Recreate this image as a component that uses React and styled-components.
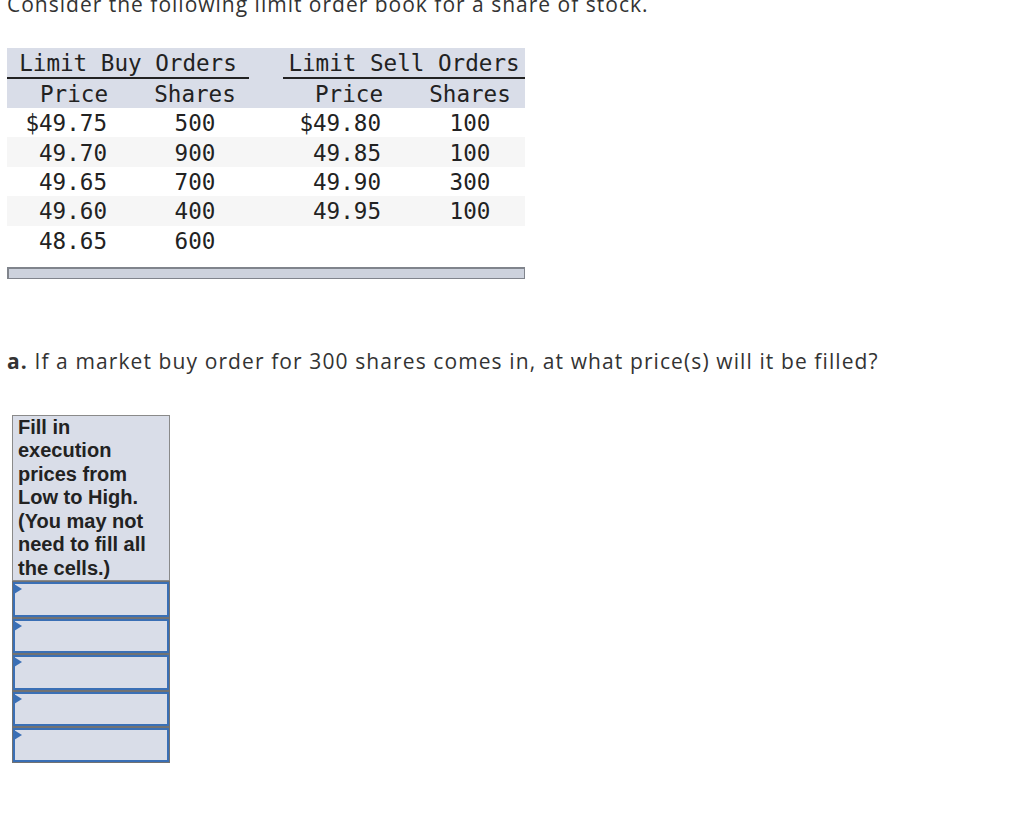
import React from 'react'
import styled, { createGlobalStyle } from 'styled-components'

const GlobalStyle = createGlobalStyle`
  body {
    margin: 0;
    background: #fff;
    overflow: hidden;
  }
`

const buyOrders = [
  ['$49.75', '500'],
  ['49.70', '900'],
  ['49.65', '700'],
  ['49.60', '400'],
  ['48.65', '600'],
]

const sellOrders = [
  ['$49.80', '100'],
  ['49.85', '100'],
  ['49.90', '300'],
  ['49.95', '100'],
]

const App = () => {
  const rows = buyOrders.map((buy, i) => [buy, sellOrders[i] || ['', '']])

  return (
    <Page>
      <GlobalStyle />
      <Intro>Consider the following limit order book for a share of stock.</Intro>

      <BookTable>
        <colgroup>
          <col style={{ width: 134 }} />
          <col style={{ width: 108 }} />
          <col style={{ width: 34 }} />
          <col style={{ width: 132 }} />
          <col style={{ width: 110 }} />
        </colgroup>
        <thead>
          <TitleRow>
            <TitleCell colSpan={2}>Limit Buy Orders</TitleCell>
            <GapCell />
            <TitleCell colSpan={2}>Limit Sell Orders</TitleCell>
          </TitleRow>
          <SubRow>
            <SubCell>Price</SubCell>
            <SubCell>Shares</SubCell>
            <GapCell />
            <SubCell>Price</SubCell>
            <SubCell>Shares</SubCell>
          </SubRow>
        </thead>
        <tbody>
          {rows.map(([buy, sell], i) => (
            <DataRow key={i} $shaded={i % 2 === 1}>
              <PriceCell>{buy[0]}</PriceCell>
              <SharesCell>{buy[1]}</SharesCell>
              <td />
              <PriceCell>{sell[0]}</PriceCell>
              <SharesCell>{sell[1]}</SharesCell>
            </DataRow>
          ))}
        </tbody>
      </BookTable>

      <ScrollBar />

      <Question>
        <b>a.</b> If a market buy order for 300 shares comes in, at what price(s) will it be filled?
      </Question>

      <FillBox>
        <FillHeader>
          Fill in execution prices from Low to High. (You may not need to fill all the cells.)
        </FillHeader>
        {[0, 1, 2, 3, 4].map((n) => (
          <FillCell key={n}>
            <FillInput type="text" aria-label={`price ${n + 1}`} />
          </FillCell>
        ))}
      </FillBox>
    </Page>
  )
}

export default App

const Page = styled.div`
  padding: 0 7px;
  color: #333;
  font-family: "Open Sans", "Liberation Sans", sans-serif;
`

const Intro = styled.p`
  margin: -9px 0 0;
  font-size: 21px;
  line-height: 27px;
  letter-spacing: 1px;
`

const BookTable = styled.table`
  margin-top: 30px;
  width: 518px;
  table-layout: fixed;
  border-collapse: separate;
  border-spacing: 0;
  font-family: "DejaVu Sans Mono", "Liberation Mono", monospace;
  font-size: 22.6px;
  color: #222;
`

const TitleRow = styled.tr`
  background: #d9dde8;
  height: 31px;
`

const TitleCell = styled.th`
  font-weight: normal;
  text-align: center;
  padding: 0;
  border-bottom: 2px solid #222;
  line-height: 28px;
`

const GapCell = styled.th`
  padding: 0;
`

const SubRow = styled.tr`
  background: #d9dde8;
  height: 29px;
`

const SubCell = styled.th`
  font-weight: normal;
  text-align: center;
  padding: 1px 0 0;
  line-height: 28px;
`

const DataRow = styled.tr`
  height: 29.4px;
  background: ${(p) => (p.$shaded ? '#f6f6f6' : '#fff')};
`

const PriceCell = styled.td`
  padding: 1px 34px 0 0;
  text-align: right;
  line-height: 28px;
`

const SharesCell = styled.td`
  padding: 1px 0 0;
  text-align: center;
  line-height: 28px;
`

const ScrollBar = styled.div`
  margin-top: 12px;
  width: 515px;
  height: 9px;
  background: #cdd2dd;
  border: 1px solid #80848c;
  border-left-width: 2px;
  border-top-width: 2px;
`

const Question = styled.p`
  margin: 69px 0 0;
  font-size: 21px;
  line-height: 27px;
  letter-spacing: 1.1px;

  b {
    font-weight: 700;
  }
`

const FillBox = styled.div`
  margin: 40px 0 0 5px;
  width: 158px;
  font-family: "Liberation Sans", Arial, sans-serif;
`

const FillHeader = styled.div`
  background: #d9dde8;
  border: 1px solid #8a8a8a;
  padding: 0 5px;
  font-size: 20px;
  font-weight: 700;
  line-height: 23.5px;
  color: #222;
`

const FillCell = styled.div`
  position: relative;
  height: 36.4px;
  box-sizing: border-box;
  border: 1px solid #727272;
  background: #727272;

  &::before {
    content: "";
    position: absolute;
    z-index: 1;
    top: 2px;
    left: 1px;
    width: 0;
    height: 0;
    border-left: 8px solid #3a6fb5;
    border-top: 5px solid transparent;
    border-bottom: 5px solid transparent;
  }
`

const FillInput = styled.input`
  display: block;
  box-sizing: border-box;
  width: 100%;
  height: 100%;
  margin: 0;
  padding: 0 8px;
  border: 2px solid #3a6fb5;
  background: #d9dde8;
  font: inherit;
  outline: none;
`
